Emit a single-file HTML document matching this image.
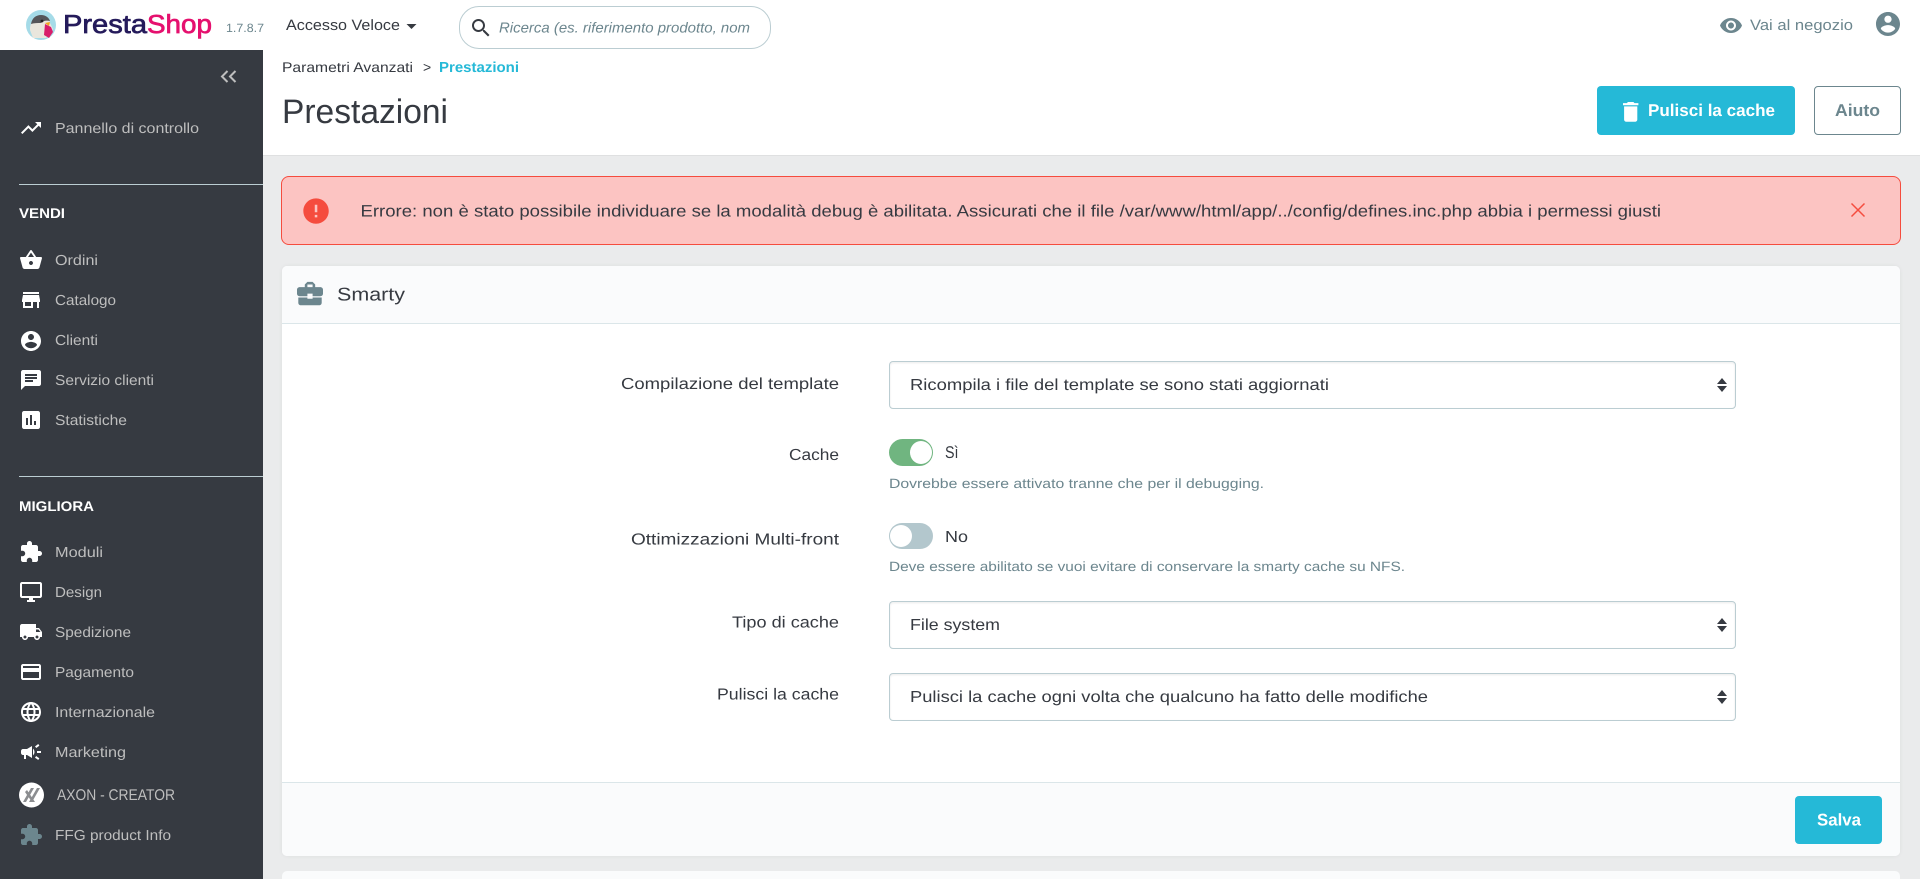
<!DOCTYPE html>
<html lang="it">
<head>
<meta charset="utf-8">
<title>Prestazioni • PrestaShop</title>
<style>
html,body{margin:0;padding:0;width:1920px;height:879px;overflow:hidden;background:#eaebec;font-family:"Liberation Sans",Arial,sans-serif}
body{position:relative}
.b{position:absolute;box-sizing:border-box}
svg.o{position:absolute;left:0;top:0;width:1920px;height:879px;display:block}
svg text{font-family:"Liberation Sans",Arial,sans-serif;text-rendering:geometricPrecision}
.nav{font-size:14.5px;fill:#bebebe}
.sec{font-size:14px;font-weight:700;fill:#fff}
.lab{font-size:16px;fill:#363a41}
.sel{font-size:16px;fill:#363a41}
.hlp{font-size:13.5px;fill:#6c868e}
.sl{border:1px solid #bbcdd2;border-radius:4px;background:#fff;box-shadow:inset 0 1px 2px rgba(0,0,0,.08);left:889px;width:847px;height:48px}
</style>
</head>
<body>
<div class="b" style="left:0;top:0;width:1920px;height:50px;background:#fff"></div>
<div class="b" style="left:263px;top:50px;width:1657px;height:106px;background:#fff;border-bottom:1px solid #dfe0e1"></div>
<div class="b" style="left:0;top:50px;width:263px;height:829px;background:#363a41"></div>
<div class="b" style="left:19px;top:184px;width:244px;height:1px;background:#bbcdd2"></div>
<div class="b" style="left:19px;top:476px;width:244px;height:1px;background:#bbcdd2"></div>
<div class="b" style="left:459px;top:6px;width:312px;height:43px;border:1px solid #bbcdd2;border-radius:20px;background:#fff"></div>
<div class="b" style="left:1597px;top:86px;width:198px;height:49px;background:#25b9d7;border-radius:4px"></div>
<div class="b" style="left:1814px;top:86px;width:87px;height:49px;border:1px solid #6c868e;border-radius:4px;background:#fff"></div>
<div class="b" style="left:281px;top:176px;width:1620px;height:69px;background:#fcc4c2;border:1px solid #f54c3e;border-radius:8px"></div>
<div class="b" style="left:282px;top:266px;width:1618px;height:590px;background:#fff;border-radius:5px;box-shadow:0 0 4px rgba(0,0,0,.06);overflow:hidden">
  <div class="b" style="left:0;top:0;width:100%;height:58px;background:#fafbfc;border-bottom:1px solid #dbe6e9"></div>
  <div class="b" style="left:0;top:516px;width:100%;height:74px;background:#fafbfc;border-top:1px solid #dbe6e9"></div>
</div>
<div class="b" style="left:282px;top:871px;width:1618px;height:8px;background:#fafbfc;border-radius:5px 5px 0 0"></div>
<div class="b sl" style="top:361px"></div>
<div class="b sl" style="top:601px"></div>
<div class="b sl" style="top:673px"></div>
<div class="b" style="left:889px;top:439px;width:44px;height:27px;background:#70b580;border-radius:14px"></div>
<div class="b" style="left:910px;top:441px;width:22px;height:23px;background:#fff;border-radius:50%"></div>
<div class="b" style="left:889px;top:523px;width:44px;height:26px;background:#b3c7cd;border-radius:13px"></div>
<div class="b" style="left:890px;top:525px;width:22px;height:22px;background:#fff;border-radius:50%"></div>
<div class="b" style="left:1795px;top:796px;width:87px;height:48px;background:#25b9d7;border-radius:4px"></div>

<svg class="o" viewBox="0 0 1920 879" xmlns="http://www.w3.org/2000/svg">
<!-- logo -->
<circle cx="41" cy="25" r="15" fill="#a5dbe8"/>
<path d="M30 30c0-8 4-14 11-14 5 0 8 3 9 7l3 6-4 6-3 3H33z" fill="#e9e6dd"/>
<path d="M31 24c1-6 5-9 10-9 5 0 8 3 9 6-4-1-7 0-9 2-3 0-7 0-10 1z" fill="#55565a"/>
<path d="M45 24l6 3 2 5-4 6-5-3z" fill="#d81e6b"/>
<path d="M45 23l5-1-1 4z" fill="#f2a31c"/>
<circle cx="42" cy="21" r="1.4" fill="#222"/>
<text x="63" y="33" font-size="26" fill="#251b5b" stroke="#251b5b" stroke-width=".7" textLength="84" lengthAdjust="spacingAndGlyphs">Presta</text>
<text x="147" y="33" font-size="26" fill="#e5106e" stroke="#e5106e" stroke-width=".7" textLength="65" lengthAdjust="spacingAndGlyphs">Shop</text>
<text x="226" y="32" font-size="12" fill="#6c868e" textLength="38" lengthAdjust="spacingAndGlyphs">1.7.8.7</text>
<text x="286" y="30" font-size="15" fill="#363a41" textLength="114" lengthAdjust="spacingAndGlyphs">Accesso Veloce</text>
<path d="M406.500 24l10 0-5 5z" fill="#363a41"/>
<path transform="translate(469 16)" fill="#363a41" d="M15.500 14h-.79l-.28-.27C15.410 12.590 16 11.110 16 9.500 16 5.910 13.090 3 9.500 3S3 5.910 3 9.500 5.910 16 9.500 16c1.610 0 3.090-.59 4.230-1.570l.27.28v.79l5 4.990L20.490 19l-4.990-5zm-6 0C7.010 14 5 11.990 5 9.500S7.010 5 9.500 5 14 7.010 14 9.500 11.990 14 9.500 14z"/>
<text x="499" y="32.500" font-size="14.500" font-style="italic" fill="#6c868e" textLength="251" lengthAdjust="spacingAndGlyphs">Ricerca (es. riferimento prodotto, nom</text>
<path transform="translate(1719 13.500)" fill="#6c868e" d="M12 4.500C7 4.500 2.730 7.610 1 12c1.730 4.390 6 7.500 11 7.500s9.270-3.110 11-7.500c-1.730-4.390-6-7.500-11-7.500zM12 17c-2.760 0-5-2.240-5-5s2.240-5 5-5 5 2.240 5 5-2.240 5-5 5zm0-8c-1.660 0-3 1.340-3 3s1.340 3 3 3 3-1.340 3-3-1.340-3-3-3z"/>
<text x="1750" y="30" font-size="15" fill="#6c868e" textLength="103" lengthAdjust="spacingAndGlyphs">Vai al negozio</text>
<path transform="translate(1873.600 9.600) scale(1.2)" fill="#6c868e" d="M12 2C6.480 2 2 6.480 2 12s4.480 10 10 10 10-4.480 10-10S17.520 2 12 2zm0 3c1.660 0 3 1.340 3 3s-1.340 3-3 3-3-1.340-3-3 1.340-3 3-3zm0 14.200c-2.500 0-4.710-1.280-6-3.220.03-1.990 4-3.080 6-3.080 1.990 0 5.970 1.090 6 3.080-1.290 1.940-3.500 3.220-6 3.220z"/>

<!-- sidebar -->
<path d="M227.500 71l-5.500 5.500 5.500 5.500M235.500 71l-5.500 5.500 5.500 5.500" fill="none" stroke="#bebebe" stroke-width="2"/>
<path transform="translate(19 116)" fill="#fff" d="M16 6l2.290 2.290-4.880 4.880-4-4L2 16.590 3.410 18l6-6 4 4 6.300-6.290L22 12V6z"/>
<text class="nav" x="55" y="133" textLength="144" lengthAdjust="spacingAndGlyphs">Pannello di controllo</text>
<text class="sec" x="19" y="218" textLength="46" lengthAdjust="spacingAndGlyphs">VENDI</text>
<path transform="translate(19 248)" fill="#fff" d="M17.210 9l-4.380-6.560c-.19-.28-.51-.42-.83-.42-.32 0-.64.140-.83.430L6.790 9H2c-.55 0-1 .450-1 1 0 .090.010.180.040.270l2.540 9.270c.230.840 1 1.460 1.920 1.460h13c.920 0 1.690-.62 1.930-1.460l2.540-9.270L23 10c0-.55-.45-1-1-1h-4.790zM9 9l3-4.400L15 9H9zm3 8c-1.100 0-2-.9-2-2s.9-2 2-2 2 .9 2 2-.9 2-2 2z"/>
<text class="nav" x="55" y="265" textLength="43" lengthAdjust="spacingAndGlyphs">Ordini</text>
<path transform="translate(19 288)" fill="#fff" d="M20 4H4v2h16V4zm1 10v-2l-1-5H4l-1 5v2h1v6h10v-6h4v6h2v-6h1zm-9 4H6v-4h6v4z"/>
<text class="nav" x="55" y="305" textLength="61" lengthAdjust="spacingAndGlyphs">Catalogo</text>
<path transform="translate(19 329)" fill="#fff" d="M12 2C6.480 2 2 6.480 2 12s4.480 10 10 10 10-4.480 10-10S17.520 2 12 2zm0 3c1.660 0 3 1.340 3 3s-1.340 3-3 3-3-1.340-3-3 1.340-3 3-3zm0 14.200c-2.500 0-4.710-1.280-6-3.220.03-1.990 4-3.080 6-3.080 1.990 0 5.970 1.090 6 3.080-1.290 1.940-3.500 3.220-6 3.220z"/>
<text class="nav" x="55" y="345" textLength="43" lengthAdjust="spacingAndGlyphs">Clienti</text>
<path transform="translate(19 368)" fill="#fff" d="M20 2H4c-1.100 0-1.990.9-1.990 2L2 22l4-4h14c1.100 0 2-.9 2-2V4c0-1.100-.9-2-2-2zM6 9h12v2H6V9zm8 5H6v-2h8v2zm4-6H6V6h12v2z"/>
<text class="nav" x="55" y="385" textLength="99" lengthAdjust="spacingAndGlyphs">Servizio clienti</text>
<path transform="translate(19 408)" fill="#fff" d="M19 3H5c-1.100 0-2 .9-2 2v14c0 1.100.9 2 2 2h14c1.100 0 2-.9 2-2V5c0-1.100-.9-2-2-2zM9 17H7v-7h2v7zm4 0h-2V7h2v10zm4 0h-2v-4h2v4z"/>
<text class="nav" x="55" y="425" textLength="72" lengthAdjust="spacingAndGlyphs">Statistiche</text>
<text class="sec" x="19" y="511" textLength="75" lengthAdjust="spacingAndGlyphs">MIGLIORA</text>
<path transform="translate(19 540)" fill="#fff" d="M20.500 11H19V7c0-1.100-.9-2-2-2h-4V3.500C13 2.120 11.880 1 10.500 1S8 2.120 8 3.500V5H4c-1.100 0-1.990.9-1.990 2v3.800H3.500c1.490 0 2.700 1.210 2.700 2.700s-1.210 2.700-2.700 2.700H2V20c0 1.100.9 2 2 2h3.800v-1.500c0-1.490 1.210-2.700 2.700-2.700 1.490 0 2.700 1.210 2.700 2.700V22H17c1.100 0 2-.9 2-2v-4h1.500c1.380 0 2.500-1.120 2.500-2.500S21.880 11 20.500 11z"/>
<text class="nav" x="55" y="557" textLength="48" lengthAdjust="spacingAndGlyphs">Moduli</text>
<path transform="translate(19 580)" fill="#fff" d="M21 2H3c-1.100 0-2 .9-2 2v12c0 1.100.9 2 2 2h7v2H8v2h8v-2h-2v-2h7c1.100 0 2-.9 2-2V4c0-1.100-.9-2-2-2zm0 14H3V4h18v12z"/>
<text class="nav" x="55" y="597" textLength="47" lengthAdjust="spacingAndGlyphs">Design</text>
<path transform="translate(19 620)" fill="#fff" d="M20 8h-3V4H3c-1.100 0-2 .9-2 2v11h2c0 1.660 1.340 3 3 3s3-1.340 3-3h6c0 1.660 1.340 3 3 3s3-1.340 3-3h2v-5l-3-4zM6 18.500c-.83 0-1.500-.67-1.500-1.500s.67-1.500 1.500-1.500 1.500.67 1.500 1.500-.67 1.500-1.500 1.500zm13.500-9l1.960 2.500H17V9.500h2.500zm-1.500 9c-.83 0-1.500-.67-1.500-1.500s.67-1.500 1.500-1.500 1.500.67 1.500 1.500-.67 1.500-1.500 1.500z"/>
<text class="nav" x="55" y="637" textLength="76" lengthAdjust="spacingAndGlyphs">Spedizione</text>
<path transform="translate(19 660)" fill="#fff" d="M20 4H4c-1.110 0-1.990.89-1.990 2L2 18c0 1.110.89 2 2 2h16c1.110 0 2-.89 2-2V6c0-1.110-.89-2-2-2zm0 14H4v-6h16v6zm0-10H4V6h16v2z"/>
<text class="nav" x="55" y="677" textLength="79" lengthAdjust="spacingAndGlyphs">Pagamento</text>
<path transform="translate(19 700)" fill="#fff" d="M11.990 2C6.470 2 2 6.480 2 12s4.470 10 9.990 10C17.520 22 22 17.520 22 12S17.520 2 11.990 2zm6.930 6h-2.950c-.32-1.250-.78-2.450-1.380-3.560 1.840.63 3.370 1.910 4.330 3.560zM12 4.040c.83 1.200 1.480 2.530 1.910 3.960h-3.820c.43-1.430 1.080-2.760 1.910-3.960zM4.260 14C4.100 13.360 4 12.690 4 12s.1-1.360.26-2h3.380c-.08.66-.14 1.320-.14 2 0 .68.060 1.340.14 2H4.260zm.82 2h2.950c.32 1.250.78 2.450 1.380 3.560-1.840-.63-3.370-1.900-4.330-3.560zm2.950-8H5.080c.96-1.660 2.490-2.930 4.330-3.560C8.810 5.550 8.350 6.750 8.030 8zM12 19.960c-.83-1.200-1.480-2.530-1.910-3.960h3.820c-.43 1.430-1.080 2.760-1.910 3.960zM14.340 14H9.660c-.09-.66-.16-1.320-.16-2 0-.68.070-1.350.16-2h4.680c.09.650.16 1.320.16 2 0 .68-.07 1.340-.16 2zm.25 5.560c.6-1.110 1.060-2.310 1.380-3.560h2.950c-.96 1.650-2.490 2.930-4.330 3.560zM16.360 14c.08-.66.14-1.320.14-2 0-.68-.06-1.340-.14-2h3.380c.16.640.26 1.310.26 2s-.1 1.360-.26 2h-3.380z"/>
<text class="nav" x="55" y="717" textLength="100" lengthAdjust="spacingAndGlyphs">Internazionale</text>
<path transform="translate(19 740)" fill="#fff" d="M18 11v2h4v-2h-4zm-2 6.610c.96.710 2.210 1.650 3.200 2.390.4-.53.8-1.070 1.200-1.600-.99-.74-2.240-1.680-3.200-2.400-.4.540-.8 1.080-1.200 1.610zM20.400 5.600c-.4-.53-.8-1.070-1.200-1.600-.99.740-2.240 1.680-3.200 2.400.4.530.8 1.070 1.200 1.600.96-.72 2.210-1.650 3.200-2.400zM4 9c-1.100 0-2 .9-2 2v2c0 1.100.9 2 2 2h1v4h2v-4h1l5 3V6L8 9H4zm11.500 3c0-1.330-.58-2.530-1.500-3.350v6.690c.92-.81 1.500-2.010 1.500-3.340z"/>
<text class="nav" x="55" y="757" textLength="71" lengthAdjust="spacingAndGlyphs">Marketing</text>
<circle cx="31.500" cy="795" r="12.500" fill="#fff"/>
<path d="M23 802l8-14h3l-8 14zM29 802l8-14h3l-8 14zM27 790l8 12h-3l-7-10z" fill="#8b8d90"/>
<text class="nav" x="57" y="800" style="font-size:15.5px" textLength="118" lengthAdjust="spacingAndGlyphs">AXON - CREATOR</text>
<path transform="translate(19 823)" fill="#6c868e" d="M20.500 11H19V7c0-1.100-.9-2-2-2h-4V3.500C13 2.120 11.880 1 10.500 1S8 2.120 8 3.500V5H4c-1.100 0-1.990.9-1.990 2v3.800H3.500c1.490 0 2.700 1.210 2.700 2.700s-1.210 2.700-2.700 2.700H2V20c0 1.100.9 2 2 2h3.800v-1.500c0-1.490 1.210-2.700 2.700-2.700 1.490 0 2.700 1.210 2.700 2.700V22H17c1.100 0 2-.9 2-2v-4h1.500c1.380 0 2.500-1.120 2.500-2.500S21.880 11 20.500 11z"/>
<text class="nav" x="55" y="840" textLength="116" lengthAdjust="spacingAndGlyphs">FFG product Info</text>

<!-- head -->
<text x="282" y="72" font-size="14" fill="#363a41" textLength="131" lengthAdjust="spacingAndGlyphs">Parametri Avanzati</text>
<text x="423" y="72" font-size="14" fill="#363a41">&gt;</text>
<text x="439" y="72" font-size="14.500" font-weight="700" fill="#25b9d7" textLength="80" lengthAdjust="spacingAndGlyphs">Prestazioni</text>
<text x="282" y="123" font-size="34" fill="#363a41" textLength="166" lengthAdjust="spacingAndGlyphs">Prestazioni</text>
<path transform="translate(1617.500 98.700) scale(1.1)" fill="#fff" d="M6 19c0 1.100.9 2 2 2h8c1.100 0 2-.9 2-2V7H6v12zM19 4h-3.500l-1-1h-5l-1 1H5v2h14V4z"/>
<text x="1648" y="116" font-size="17" font-weight="700" fill="#fff" textLength="127" lengthAdjust="spacingAndGlyphs">Pulisci la cache</text>
<text x="1835" y="116" font-size="17" font-weight="700" fill="#6c868e" textLength="45" lengthAdjust="spacingAndGlyphs">Aiuto</text>

<!-- alert -->
<path transform="translate(300.800 195.800) scale(1.27)" fill="#f54c3e" d="M12 2C6.480 2 2 6.480 2 12s4.480 10 10 10 10-4.480 10-10S17.520 2 12 2zm1 15h-2v-2h2v2zm0-4h-2V7h2v6z"/>
<text x="360.500" y="216.500" font-size="16.500" fill="#363a41" textLength="1300.500" lengthAdjust="spacingAndGlyphs">Errore: non è stato possibile individuare se la modalità debug è abilitata. Assicurati che il file /var/www/html/app/../config/defines.inc.php abbia i permessi giusti</text>
<path d="M1851.500 203.500l13 13M1864.500 203.500l-13 13" stroke="#f54c3e" stroke-width="1.500" fill="none"/>

<!-- card -->
<path transform="translate(294.400 278) scale(1.3)" fill="#6c868e" d="M10 16v-1H3.010L3 19c0 1.110.89 2 2 2h14c1.110 0 2-.89 2-2v-4h-7v1h-4zm10-9h-4.010V5l-2-2h-4l-2 2v2H4c-1.100 0-2 .9-2 2v3c0 1.110.89 2 2 2h6v-2h4v2h6c1.100 0 2-.9 2-2V9c0-1.100-.9-2-2-2zm-6 0h-4V5h4v2z"/>
<text x="337" y="300.500" font-size="18.500" fill="#363a41" textLength="68" lengthAdjust="spacingAndGlyphs">Smarty</text>
<text class="lab" x="621" y="389" textLength="218" lengthAdjust="spacingAndGlyphs">Compilazione del template</text>
<text class="lab" x="789" y="460" textLength="50" lengthAdjust="spacingAndGlyphs">Cache</text>
<text class="lab" x="631" y="544.500" textLength="208" lengthAdjust="spacingAndGlyphs">Ottimizzazioni Multi-front</text>
<text class="lab" x="732" y="627.500" textLength="107" lengthAdjust="spacingAndGlyphs">Tipo di cache</text>
<text class="lab" x="717" y="699.500" textLength="122" lengthAdjust="spacingAndGlyphs">Pulisci la cache</text>
<text class="sel" x="910" y="390" textLength="419" lengthAdjust="spacingAndGlyphs">Ricompila i file del template se sono stati aggiornati</text>
<text class="sel" x="910" y="630" textLength="90" lengthAdjust="spacingAndGlyphs">File system</text>
<text class="sel" x="910" y="702" textLength="518" lengthAdjust="spacingAndGlyphs">Pulisci la cache ogni volta che qualcuno ha fatto delle modifiche</text>
<path d="M1717 384l5-6 5 6zM1717 386h10l-5 6zM1717 624l5-6 5 6zM1717 626h10l-5 6zM1717 696l5-6 5 6zM1717 698h10l-5 6z" fill="#363a41"/>
<text class="lab" x="945" y="458" style="font-size:17px" textLength="13.500" lengthAdjust="spacingAndGlyphs">Sì</text>
<text class="lab" x="945" y="542" textLength="23" lengthAdjust="spacingAndGlyphs">No</text>
<text class="hlp" x="889" y="488" textLength="375" lengthAdjust="spacingAndGlyphs">Dovrebbe essere attivato tranne che per il debugging.</text>
<text class="hlp" x="889" y="571" textLength="516" lengthAdjust="spacingAndGlyphs">Deve essere abilitato se vuoi evitare di conservare la smarty cache su NFS.</text>
<text x="1817" y="825.500" font-size="17" font-weight="700" fill="#fff" textLength="44" lengthAdjust="spacingAndGlyphs">Salva</text>
</svg>
</body>
</html>
